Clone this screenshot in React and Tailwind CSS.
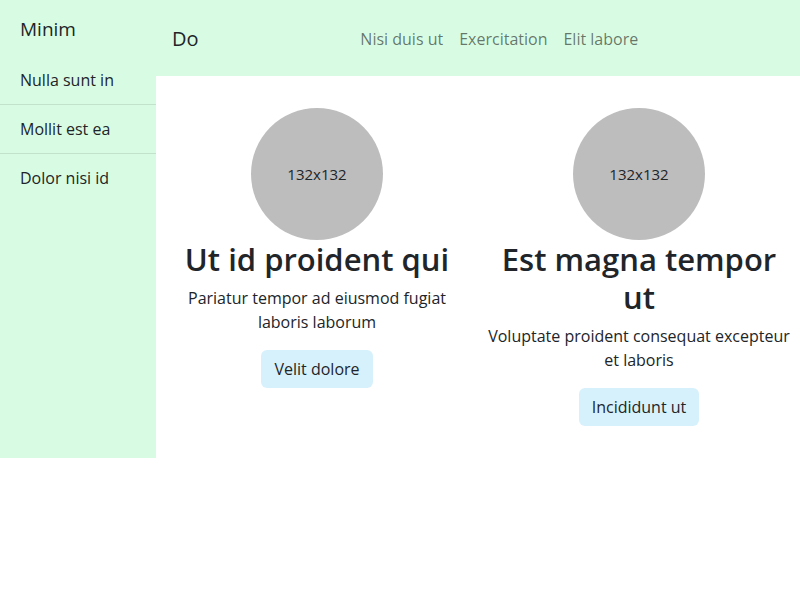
export default function App() {
  const cards = [
    {
      title: "Ut id proident qui",
      text: "Pariatur tempor ad eiusmod fugiat laboris laborum",
      button: "Velit dolore",
    },
    {
      title: "Est magna tempor ut",
      text: "Voluptate proident consequat excepteur et laboris",
      button: "Incididunt ut",
    },
  ];

  return (
    <div className="flex w-full text-[#212529]" style={{ fontFamily: '"Open Sans", "Noto Sans", sans-serif' }}>
      <aside className="w-[156px] shrink-0 bg-[#d8fce3]">
        <div className="px-5 pt-[14px] pb-[12px] text-[19px] leading-[30px]">Minim</div>
        <ul>
          <li className="px-5 py-3 leading-6 border-b border-black/10">Nulla sunt in</li>
          <li className="px-5 py-3 leading-6 border-b border-black/10">Mollit est ea</li>
          <li className="px-5 py-3 leading-6">Dolor nisi id</li>
        </ul>
      </aside>

      <div className="flex-1 flex flex-col">
        <nav className="h-[76px] bg-[#d8fce3] flex items-center px-4 pt-[2px]">
          <a className="text-xl leading-[30px] mr-4">Do</a>
          <div className="mx-auto flex gap-4 text-black/55">
            <a>Nisi duis ut</a>
            <a>Exercitation</a>
            <a>Elit labore</a>
          </div>
        </nav>

        <main className="grid grid-cols-2 pt-8 pb-8 items-start">
          {cards.map((c) => (
            <div key={c.title} className="px-1.5 flex flex-col items-center text-center">
              <div className="w-[132px] h-[132px] rounded-full bg-[#bdbdbd] flex items-center justify-center text-[15px]">
                132x132
              </div>
              <h2 className="text-[31px] font-semibold leading-[38px] mb-2">{c.title}</h2>
              <p className="leading-6 mb-4">{c.text}</p>
              <button className="bg-[#d7f1fc] rounded-md px-3 py-1.5 leading-6 border border-transparent">
                {c.button}
              </button>
            </div>
          ))}
        </main>
      </div>
    </div>
  );
}
